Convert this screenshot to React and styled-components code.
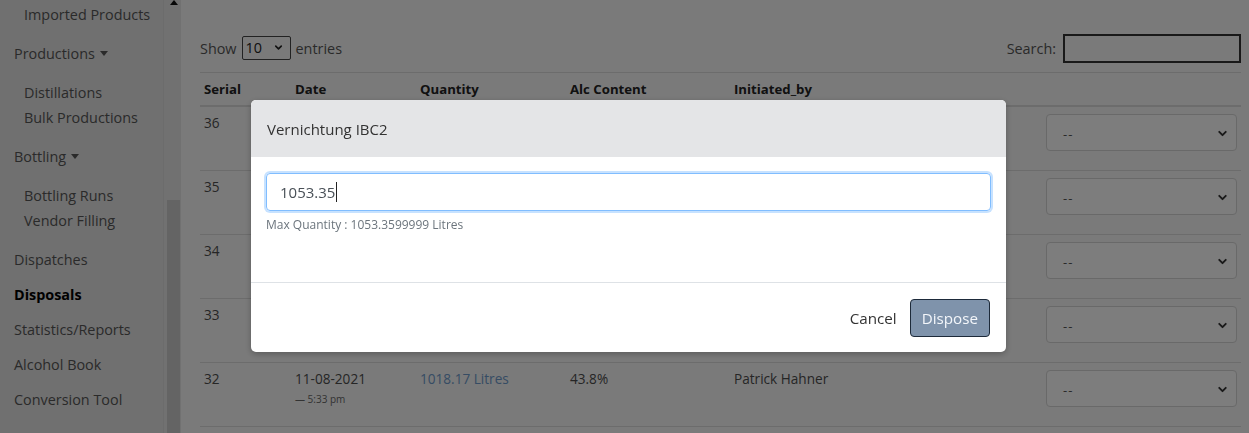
import React from 'react'
import styled, { createGlobalStyle } from 'styled-components'
import { ChevronDown } from 'lucide-react'

const GlobalStyle = createGlobalStyle`
  html, body {
    margin: 0;
    padding: 0;
    overflow: hidden;
  }
  body {
    font-family: "Open Sans", "Noto Sans", Arial, sans-serif;
    color: #4c4c4c;
  }
`

const Page = styled.div`
  display: flex;
  height: 433px;
  overflow: hidden;
  background: #f4f4f4;
`

const Sidebar = styled.aside`
  width: 181px;
  flex: none;
  display: flex;
  background: #e0e0e0;
`

const Nav = styled.nav`
  flex: 1;
  padding-top: 2px;
`

const NavItem = styled.div`
  height: 35px;
  display: flex;
  align-items: center;
  gap: 5px;
  padding-left: 14px;
  font-size: 14.4px;
  color: ${p => (p.$active ? '#000' : '#555')};
  font-weight: ${p => (p.$active ? 700 : 400)};
  white-space: nowrap;
`

const SubList = styled.div`
  padding: ${p => (p.$first ? '0 0 9px' : '9px 0')};
`

const SubItem = styled.div`
  height: 25px;
  display: flex;
  align-items: center;
  padding-left: 24px;
  font-size: 14.4px;
  color: #555;
  white-space: nowrap;
`

const Track = styled.div`
  width: 17px;
  flex: none;
  display: flex;
  flex-direction: column;
  align-items: center;
  border-left: 1px solid #d8d8d8;
  background: #e2e2e2;
`

const TrackArrow = styled.div`
  height: 200px;
  display: flex;
  justify-content: center;
  padding-left: 2px;
`

const Thumb = styled.div`
  width: 13px;
  margin-left: 2px;
  flex: 1;
  background: #c8c8c8;
`

const Main = styled.main`
  flex: 1;
  padding: 34px 8px 0 19px;
  min-width: 0;
`

const Toolbar = styled.div`
  height: 29px;
  display: flex;
  align-items: center;
  justify-content: space-between;
  margin-bottom: 9px;
  font-size: 14.4px;
  color: #555;
`

const Group = styled.label`
  display: flex;
  align-items: center;
  gap: 5px;
`

const LengthSelect = styled.div`
  width: 49px;
  height: 24px;
  border: 1px solid #444;
  border-radius: 2px;
  display: flex;
  align-items: center;
  justify-content: space-between;
  padding: 0 6px 0 3px;
  box-sizing: border-box;
  margin-top: -2px;
  color: #222;
  font-size: 14.4px;
`

const SearchInput = styled.div`
  width: 178px;
  height: 29px;
  box-sizing: border-box;
  border: 2px solid #333;
  margin-left: 2px;
`

const Grid = styled.div`
  display: grid;
  grid-template-columns: 91px 125px 150px 164px 1fr 199px;
  align-items: start;
`

const HeadRow = styled(Grid)`
  height: 32px;
  align-items: center;
  border-top: 1px solid #d8d8d8;
  border-bottom: 2px solid #d8d8d8;
`

const Th = styled.div`
  padding-left: 4px;
  font-size: 13.2px;
  font-weight: 700;
  color: #222;
`

const Row = styled(Grid)`
  height: 63px;
  border-bottom: 1px solid #d8d8d8;
`

const Td = styled.div`
  padding: 5px 0 0 4px;
  font-size: 13.6px;
  line-height: 21px;
  color: ${p => (p.$link ? '#6d98c9' : '#4c4c4c')};
`

const Time = styled.div`
  font-size: 10px;
  line-height: 14px;
  margin-top: 3px;
  color: #666;
`

const ActionCell = styled.div`
  padding: 7px 4px 0;
`

const StatusSelect = styled.div`
  height: 37px;
  box-sizing: border-box;
  border: 1px solid #d2d2d2;
  border-radius: 4px;
  background: #fafafa;
  display: flex;
  align-items: center;
  justify-content: space-between;
  padding: 2px 7px 0 16px;
  font-size: 13px;
  color: #555;
  letter-spacing: 1px;
`

const Backdrop = styled.div`
  position: fixed;
  inset: 0;
  background: rgba(0, 0, 0, 0.5);
`

const Dialog = styled.div`
  position: fixed;
  left: 251px;
  top: 100px;
  width: 755px;
  background: #fff;
  border-radius: 5px;
  overflow: hidden;
  box-shadow: 0 2px 6px rgba(0, 0, 0, 0.25);
`

const DialogHeader = styled.div`
  height: 57px;
  display: flex;
  align-items: center;
  padding: 0 16px;
  background: #e4e5e7;
  font-size: 15px;
  color: #333;
`

const DialogBody = styled.div`
  padding: 16px 15px 0;
  height: 125px;
  box-sizing: border-box;
`

const Field = styled.div`
  height: 38px;
  box-sizing: border-box;
  border: 1px solid #80bdff;
  border-radius: 4px;
  box-shadow: 0 0 0 2px rgba(0, 123, 255, 0.22);
  display: flex;
  align-items: center;
  padding-left: 13px;
  font-size: 15px;
  color: #495057;
`

const Caret = styled.span`
  display: inline-block;
  width: 1px;
  height: 20px;
  background: #222;
  margin-left: 1px;
`

const Help = styled.div`
  margin-top: 5px;
  font-size: 12px;
  line-height: 18px;
  color: #6c757d;
`

const DialogFooter = styled.div`
  border-top: 1px solid #dee2e6;
  height: 70px;
  box-sizing: border-box;
  display: flex;
  align-items: center;
  justify-content: flex-end;
  padding: 0 16px 0 0;
`

const Button = styled.button`
  height: 38px;
  font-family: inherit;
  font-size: 15.2px;
  border-radius: 4px;
  padding: 0 ${p => (p.$primary ? '11px' : '12px')};
  border: 1px solid ${p => (p.$primary ? '#1d2a3a' : 'transparent')};
  background: ${p => (p.$primary ? '#7f93ab' : 'transparent')};
  color: ${p => (p.$primary ? '#f3f6fa' : '#333')};
  margin-top: 1px;
`

const Triangle = ({ w = 8, h = 5 }) => (
  <svg width={w} height={h} viewBox="0 0 8 5">
    <path d="M0 0 L8 0 L4 5 Z" fill="currentColor" />
  </svg>
)

const rows = [
  { id: 36 },
  { id: 35 },
  { id: 34 },
  { id: 33 },
  { id: 32, date: '11-08-2021', time: '— 5:33 pm', qty: '1018.17 Litres', alc: '43.8%', by: 'Patrick Hahner' }
]

export default function App() {
  return (
    <>
      <GlobalStyle />
      <Page>
        <Sidebar>
          <Nav>
            <SubList $first>
              <SubItem>Imported Products</SubItem>
            </SubList>
            <NavItem>Productions <Triangle /></NavItem>
            <SubList>
              <SubItem>Distillations</SubItem>
              <SubItem>Bulk Productions</SubItem>
            </SubList>
            <NavItem>Bottling <Triangle /></NavItem>
            <SubList>
              <SubItem>Bottling Runs</SubItem>
              <SubItem>Vendor Filling</SubItem>
            </SubList>
            <NavItem>Dispatches</NavItem>
            <NavItem $active>Disposals</NavItem>
            <NavItem>Statistics/Reports</NavItem>
            <NavItem>Alcohol Book</NavItem>
            <NavItem>Conversion Tool</NavItem>
          </Nav>
          <Track>
            <TrackArrow>
              <svg width="8" height="5" viewBox="0 0 8 5">
                <path d="M0 5 L8 5 L4 0 Z" fill="#111" />
              </svg>
            </TrackArrow>
            <Thumb />
          </Track>
        </Sidebar>
        <Main>
          <Toolbar>
            <Group>
              Show
              <LengthSelect>
                10
                <ChevronDown size={11} strokeWidth={3.5} color="#222" />
              </LengthSelect>
              entries
            </Group>
            <Group>
              Search:
              <SearchInput />
            </Group>
          </Toolbar>
          <HeadRow>
            <Th>Serial</Th>
            <Th>Date</Th>
            <Th>Quantity</Th>
            <Th>Alc Content</Th>
            <Th>Initiated_by</Th>
            <Th />
          </HeadRow>
          {rows.map(r => (
            <Row key={r.id}>
              <Td>{r.id}</Td>
              <Td>
                {r.date}
                {r.time && <Time>{r.time}</Time>}
              </Td>
              <Td $link>{r.qty}</Td>
              <Td>{r.alc}</Td>
              <Td>{r.by}</Td>
              <ActionCell>
                <StatusSelect>
                  --
                  <ChevronDown size={13} strokeWidth={3.5} color="#333" />
                </StatusSelect>
              </ActionCell>
            </Row>
          ))}
        </Main>
      </Page>
      <Backdrop />
      <Dialog>
        <DialogHeader>Vernichtung IBC2</DialogHeader>
        <DialogBody>
          <Field>
            1053.35<Caret />
          </Field>
          <Help>Max Quantity : 1053.3599999 Litres</Help>
        </DialogBody>
        <DialogFooter>
          <Button>Cancel</Button>
          <Button $primary>Dispose</Button>
        </DialogFooter>
      </Dialog>
    </>
  )
}
